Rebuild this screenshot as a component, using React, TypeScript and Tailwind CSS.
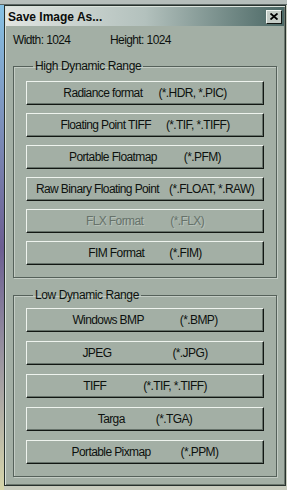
import { ReactNode } from "react";

type Format = {
  name: string;
  ext: string;
  gap: string;
  disabled?: boolean;
};

const HDR_FORMATS: Format[] = [
  { name: "Radiance format", ext: "(*.HDR, *.PIC)", gap: "gap-[16px]" },
  { name: "Floating Point TIFF", ext: "(*.TIF, *.TIFF)", gap: "gap-[15px]" },
  { name: "Portable Floatmap", ext: "(*.PFM)", gap: "gap-[27px]" },
  { name: "Raw Binary Floating Point", ext: "(*.FLOAT, *.RAW)", gap: "gap-[10px]" },
  { name: "FLX Format", ext: "(*.FLX)", gap: "gap-[27px]", disabled: true },
  { name: "FIM Format", ext: "(*.FIM)", gap: "gap-[25px]" },
];

const LDR_FORMATS: Format[] = [
  { name: "Windows BMP", ext: "(*.BMP)", gap: "gap-[36px]" },
  { name: "JPEG", ext: "(*.JPG)", gap: "gap-[61px]" },
  { name: "TIFF", ext: "(*.TIF, *.TIFF)", gap: "gap-[37px]" },
  { name: "Targa", ext: "(*.TGA)", gap: "gap-[31px]" },
  { name: "Portable Pixmap", ext: "(*.PPM)", gap: "gap-[30px]" },
];

function FormatButton({ name, ext, gap, disabled }: Format) {
  return (
    <button
      type="button"
      disabled={disabled}
      className={`h-[24px] w-full flex items-center justify-center ${gap} bg-[#a3afa5] border-t border-l border-[#eef3ee] border-b-[#121713] border-r-[#121713] border-b border-r shadow-[inset_-1px_-1px_0_#66726a] text-[12px] tracking-[-0.6px] leading-none ${
        disabled
          ? "text-[#66726a] [text-shadow:1px_1px_0_#b8c2ba]"
          : "text-[#0d110e]"
      }`}
    >
      <span>{name}</span>
      <span>{ext}</span>
    </button>
  );
}

function Group({
  title,
  className,
  children,
}: {
  title: string;
  className: string;
  children: ReactNode;
}) {
  return (
    <fieldset
      className={`border border-[#55615a] shadow-[1px_1px_0_#c3ccc4,inset_1px_1px_0_#c3ccc4] px-[12px] ${className}`}
    >
      <legend className="ml-[7px] px-[2px] text-[12px] leading-[14px] tracking-[-0.4px] text-[#0d110e]">
        {title}
      </legend>
      {children}
    </fieldset>
  );
}

export default function App() {
  return (
    <div className="w-[287px] h-[490px] flex flex-col bg-[#c8ccbe] overflow-hidden font-['Liberation_Sans',Arial,sans-serif]">
      <div className="h-[5px] bg-[#b6bebb] border-b border-[#5d6764]" />
      <div className="flex">
        <div className="w-[4px] h-[485px] bg-gradient-to-b from-[#86c2e4] via-[#6c5e92] to-[#d6d6aa]" />
        <div className="w-[282px] h-[481px] border border-[#27312d] bg-[#a3afa5] shadow-[inset_1px_1px_0_#dbe3dc,inset_-1px_-1px_0_#6b776d] p-[1px] flex flex-col">
          <div className="h-[19px] flex items-center justify-between bg-gradient-to-r from-[#e1e5e1] via-[#b3c1bd] to-[#4b6865]">
            <span className="pl-[2px] text-[12px] font-bold text-[#0a0d0b]">
              Save Image As...
            </span>
            <button
              type="button"
              className="mr-[2px] w-[16px] h-[14px] flex items-center justify-center bg-[#c4ccc6] border-t border-l border-[#f2f6f2] border-b border-r border-b-[#111511] border-r-[#111511]"
            >
              <svg width="8" height="7" viewBox="0 0 8 7">
                <path d="M0.5 0.5 L7.5 6.5 M7.5 0.5 L0.5 6.5" stroke="#000" strokeWidth="1.8" />
              </svg>
            </button>
          </div>

          <div className="flex flex-col px-[7px]">
            <div className="mt-[7px] flex text-[12px] leading-[14px] tracking-[-0.6px] text-[#0d110e]">
              <span className="w-[97px]">Width: 1024</span>
              <span>Height: 1024</span>
            </div>

            <Group title="High Dynamic Range" className="mt-[12px] pt-[8px] pb-[12px]">
              <div className="flex flex-col gap-[8px]">
                {HDR_FORMATS.map((f) => (
                  <FormatButton key={f.name} {...f} />
                ))}
              </div>
            </Group>

            <Group title="Low Dynamic Range" className="mt-[10px] pt-[6px] pb-[12px]">
              <div className="flex flex-col gap-[9px]">
                {LDR_FORMATS.map((f) => (
                  <FormatButton key={f.name} {...f} />
                ))}
              </div>
            </Group>
          </div>
        </div>
      </div>
    </div>
  );
}
